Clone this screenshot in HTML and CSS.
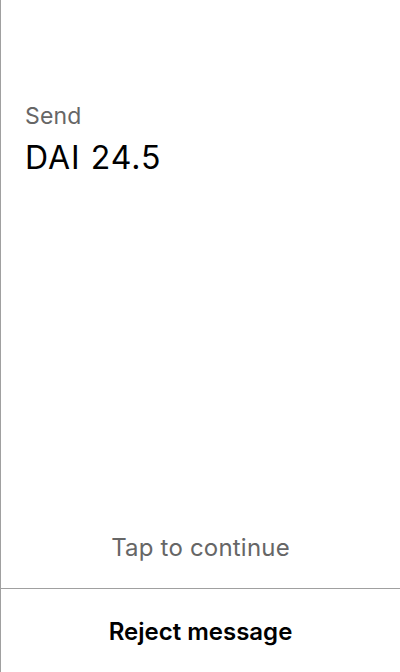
FILE: index.html
```html
<!DOCTYPE html>
<html>
<head>
<meta charset="utf-8">
<link rel="stylesheet" href="styles.css">
</head>
<body>
<div class="screen">
  <div class="content">
    <div class="label">Send</div>
    <div class="amount">DAI 24.5</div>
  </div>
  <div class="hint">Tap to continue</div>
  <div class="footer">
    <div class="reject">Reject message</div>
  </div>
</div>
</body>
</html>
```
FILE: styles.css
```css
html, body {
  margin: 0;
  padding: 0;
  background: #fff;
}
body {
  font-family: Inter, "Noto Sans", sans-serif;
}
.screen {
  box-sizing: border-box;
  width: 400px;
  height: 672px;
  border-left: 1px solid #a0a0a0;
  display: flex;
  flex-direction: column;
}
.content {
  flex: 1;
  padding: 100px 24px 0 24px;
}
.label {
  font-size: 23px;
  line-height: 32px;
  color: #666;
  letter-spacing: 0.2px;
}
.amount {
  font-size: 32px;
  line-height: 40px;
  color: #000;
  margin-top: 6px;
  letter-spacing: 1px;
}
.hint {
  text-align: center;
  font-size: 24px;
  line-height: 32px;
  color: #666;
  letter-spacing: 0.2px;
  padding-bottom: 24px;
}
.footer {
  border-top: 1px solid #a0a0a0;
  height: 84px;
  box-sizing: border-box;
  padding-top: 2px;
  display: flex;
  align-items: center;
  justify-content: center;
}
.reject {
  font-size: 24px;
  font-weight: 600;
  color: #000;
}
```
